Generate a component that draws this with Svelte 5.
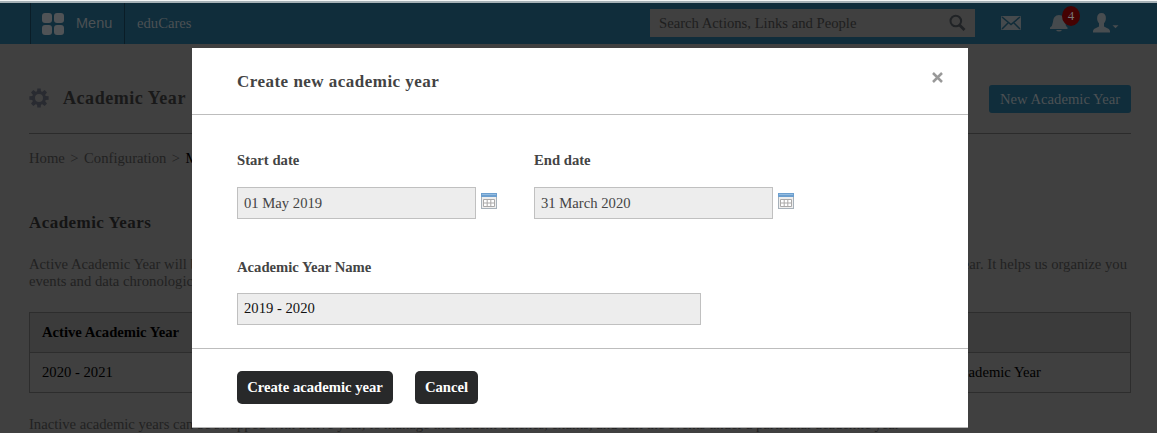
<script>
  const crumbs = ['Home', 'Configuration', 'Manage'];
  const dates = [
    { label: 'Start date', value: '01 May 2019' },
    { label: 'End date', value: '31 March 2020' }
  ];
  const teeth = [0, 45, 90, 135, 180, 225, 270, 315];
</script>

<div class="screen">
  <header class="topbar">
    <div class="menu">
      <div class="tiles"><i></i><i></i><i></i><i></i></div>
      <span>Menu</span>
    </div>
    <div class="brand">eduCares</div>
    <div class="search">
      <span>Search Actions, Links and People</span>
      <svg width="18" height="18" viewBox="0 0 18 18" fill="none" stroke="#202326">
        <circle cx="6.800" cy="7" r="5.300" stroke-width="2" />
        <path d="M10.500 11l5 5" stroke-width="2.900" />
      </svg>
    </div>
    <svg class="mail" width="20" height="14" viewBox="0 0 20 14">
      <rect width="20" height="14" rx="1" fill="#454a4d" />
      <path d="M1 1l9 7.5L19 1M1 13l6.5-6.5M19 13l-6.5-6.5" fill="none" stroke="#102c39" stroke-width="1.500" />
    </svg>
    <div class="bell">
      <svg width="18" height="18" viewBox="0 0 18 18" fill="#454a4d">
        <path d="M0 15v-1.500q2.500-1.300 2.800-5Q3.200 1 9 1t6.200 7.500q.3 3.700 2.300 5v1.500zM6 16h6q-1 1.600-3 1.600T6 16z" />
      </svg>
      <b class="badge">4</b>
    </div>
    <svg class="user" width="27" height="20" viewBox="0 0 27 20" fill="#484d50">
      <path d="M9.500 0c3 0 4.500 2 4.400 5 0 2.300-.7 4.100-1.900 5.300v2.900c.4 1.300 5.500 1.500 6 4.800v1.500H1v-1.500c.5-3.300 5.600-3.500 6-4.800v-2.900C5.700 9.100 5.100 7.300 5.100 5c0-3 1.500-5 4.400-5z" />
      <path d="M20.500 12.300h6l-3 3z" />
    </svg>
  </header>

  <main class="page">
    <div class="titlebar">
      <svg width="20" height="20" viewBox="-10 -10 20 20" fill="#292b31">
        {#each teeth as angle}
          <path d="M-2-6l.3-3.600h3.400L2-6z" transform="rotate({angle})" />
        {/each}
        <circle r="5.500" fill="none" stroke="#292b31" stroke-width="3" />
      </svg>
      <h1>Academic Year</h1>
      <span class="new">New Academic Year</span>
    </div>

    <nav>
      {#each crumbs as crumb, i}
        {#if i}<span>&gt;</span>{/if}
        <span class:current={i === crumbs.length - 1}>{crumb}</span>
      {/each}
    </nav>

    <h2>Academic Years</h2>
    <div class="intro">
      <div class="line">
        <span>Active Academic Year will be the default academic year</span>
        <span>for the current academic year. It helps us organize you</span>
      </div>
      <div>events and data chronologically.</div>
    </div>

    <div class="table">
      <div class="row head"><span>Active Academic Year</span></div>
      <div class="row"><span>2020 - 2021</span><span>Change Academic Year</span></div>
    </div>

    <p class="note">Inactive academic years can be swapped with active year, to manage the student batches, exams, and edit the events under a particular academic year</p>
  </main>

  <section class="modal">
    <div class="modal-head">
      <h3>Create new academic year</h3>
      <svg width="11" height="11" viewBox="0 0 11 11" stroke="#999" stroke-width="2.500">
        <path d="M1 1l9 9M10 1l-9 9" />
      </svg>
    </div>
    <div class="modal-body">
      <div class="dates">
        {#each dates as date}
          <div class="field">
            <div class="label">{date.label}</div>
            <div class="pick">
              <div class="input">{date.value}</div>
              <svg width="16" height="16" viewBox="0 0 16 16">
                <rect x=".5" y=".5" width="15" height="15" fill="#eeeeee" stroke="#a7b1ba" />
                <rect width="16" height="4" fill="#6c9fcf" />
                <rect x="1" y="1" width="14" height="1" fill="#94bce0" />
                <path d="M2.500 6.500h11v7h-11zM2.500 10h11M6.200 6.500v7M9.800 6.500v7" fill="#fff" stroke="#aaa9a9" />
              </svg>
            </div>
          </div>
        {/each}
      </div>
      <div class="field name">
        <div class="label">Academic Year Name</div>
        <div class="input">2019 - 2020</div>
      </div>
    </div>
    <div class="modal-foot">
      <span class="btn create">Create academic year</span>
      <span class="btn cancel">Cancel</span>
    </div>
  </section>
</div>

<style>
  .screen {
    position: relative;
    box-sizing: border-box;
    width: 1157px;
    height: 433px;
    overflow: hidden;
    background: #404040;
    border-top: 1px solid #f4f6f6;
    font: 14.667px/17px "Liberation Serif", serif;
    white-space: nowrap;
    color: #222;
  }
  h1, h2, h3, p { margin: 0; }
  svg { display: block; flex: none; }

  .topbar {
    display: flex;
    box-sizing: border-box;
    height: 43px;
    border-top: 2px solid #a7b2b7;
    background: #102d3b;
    padding-left: 30px;
    color: #4c5154;
  }
  .menu {
    display: flex;
    align-items: center;
    box-sizing: border-box;
    width: 95px;
    padding: 0 0 1px 11px;
    border-left: 1px solid #0a1d27;
    border-right: 1px solid #0a1d27;
    font-family: "Liberation Sans", sans-serif;
    font-size: 14.5px;
  }
  .tiles {
    display: grid;
    grid-template-columns: 10px 10px;
    gap: 2px;
    width: 22px;
    margin: 1px 12px 0 0;
  }
  .tiles i {
    height: 10px;
    border-radius: 3px;
    background: #505356;
  }
  .brand { width: 525px; padding: 12px 0 0 12px; box-sizing: border-box; }
  .search {
    display: flex;
    justify-content: space-between;
    align-items: center;
    box-sizing: border-box;
    width: 325px;
    height: 28px;
    margin-top: 6px;
    padding: 0 8px 0 9px;
    background: #404040;
    color: #1e1e1e;
  }
  .mail { margin: 13px 0 0 26px; }
  .bell { position: relative; margin: 11px 0 0 29px; }
  .badge {
    position: absolute;
    left: 12px;
    top: -8px;
    width: 18px;
    height: 20px;
    border-radius: 50%;
    background: #450202;
    color: #777;
    font-weight: 400;
    font-size: 13px;
    line-height: 20px;
    text-align: center;
  }
  .user { margin: 10px 0 0 24px; }

  .page { padding: 41px 26px 0 29px; }
  .titlebar {
    display: flex;
    align-items: center;
    height: 28px;
    padding-bottom: 20px;
    border-bottom: 1px solid #2b2b2b;
  }
  .titlebar svg { margin-top: -2px; }
  h1 {
    margin: -2px auto 0 14px;
    font-size: 18px;
    letter-spacing: 0.55px;
    color: #191919;
  }
  .new {
    width: 142px;
    border-radius: 3px;
    background: #102d3b;
    color: #4c5154;
    line-height: 28px;
    text-align: center;
  }
  nav { display: flex; gap: 5.5px; margin-top: 16px; color: #222; }
  .current { color: #000; }
  h2 {
    margin-top: 47px;
    font-size: 17px;
    line-height: 17px;
    letter-spacing: 0.45px;
    color: #141414;
  }
  .intro { margin-top: 25px; }
  .line { display: flex; justify-content: space-between; padding-right: 4px; }
  .table { margin-top: 22px; border: 1px solid #2d2d2d; color: #000; }
  .row {
    display: flex;
    justify-content: space-between;
    height: 39px;
    line-height: 39px;
    padding: 0 89px 0 12px;
  }
  .head {
    background: #3b3b3b;
    border-bottom: 1px solid #2d2d2d;
    font-weight: 700;
  }
  .note { margin-top: 23px; letter-spacing: -0.02px; }

  .modal {
    position: absolute;
    left: 192px;
    top: 47px;
    box-sizing: border-box;
    width: 776px;
    height: 380px;
    border-bottom: 1px solid #b5b5b5;
    background: #fff;
    color: #444;
  }
  .modal-head {
    display: flex;
    justify-content: space-between;
    align-items: center;
    box-sizing: border-box;
    height: 67px;
    padding: 0 25px 0 45px;
    border-bottom: 1px solid #bdbdbd;
  }
  .modal-head svg { margin-bottom: 7px; }
  h3 { font-size: 17px; letter-spacing: 0.48px; color: #434343; }
  .modal-body {
    box-sizing: border-box;
    height: 234px;
    padding: 37px 45px 0;
    border-bottom: 1px solid #bdbdbd;
  }
  .dates { display: flex; gap: 37px; }
  .label { margin-bottom: 18px; font-weight: 700; }
  .pick { display: flex; gap: 5px; }
  .pick svg { margin-top: 6px; }
  .input {
    box-sizing: border-box;
    width: 239px;
    height: 32px;
    padding-left: 6px;
    border: 1px solid #c0c0c0;
    background: #ededed;
    line-height: 30px;
  }
  .name { margin-top: 40px; }
  .name .label { margin-bottom: 17px; }
  .name .input { width: 464px; line-height: 28px; color: #111; }
  .modal-foot { display: flex; gap: 22px; padding: 22px 45px; }
  .btn {
    height: 33px;
    border-radius: 5px;
    background: #28292a;
    color: #fff;
    font-weight: 700;
    line-height: 33px;
    text-align: center;
  }
  .create { width: 156px; }
  .cancel { width: 63px; }
</style>
